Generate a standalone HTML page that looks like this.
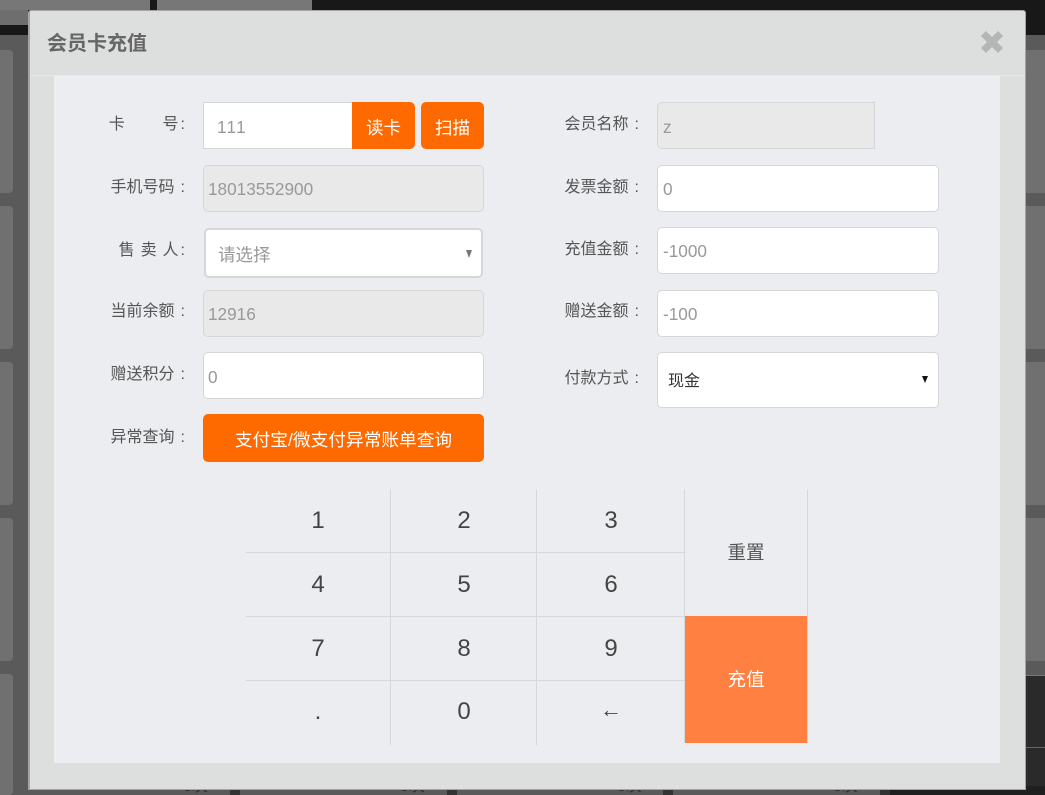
<!DOCTYPE html>
<html lang="zh"><head><meta charset="utf-8"><title>会员卡充值</title>
<style>
*{box-sizing:border-box}
html{margin:0;padding:0;background:#5b5b5b;width:1045px;height:795px;overflow:hidden}
body{margin:0;padding:0;width:1045px;height:795px;overflow:hidden;position:relative;font-family:"Liberation Sans","Noto Sans CJK SC",sans-serif;filter:blur(.3px);background:#5b5b5b}
div{position:absolute}
.l{left:0;width:185px;text-align:right;font-size:16px;line-height:24px;color:#555;white-space:pre}
.l i{font-style:normal;margin-left:6px}
.l i.s{margin-left:2px}
.r{left:454px;width:185px}
.f{height:47px;border:1px solid #d5d6d8;border-radius:5px;background:#fff;font-size:17.2px;line-height:47px;color:#999;padding-left:4px;white-space:pre;font-kerning:none}
.d{background:#e9e9e9}
.o{background:#ff6a00;color:#fff;text-align:center;font-size:17.5px;border-radius:5px}
.h{height:1px;background:#d6d7d9}
.v{width:1px;background:#d6d7d9}
.k{text-align:center;font-size:24px;line-height:30px;color:#444;width:60px}
.bg{background:#707070;border-radius:4px}
.b{font-size:16px;line-height:16px;color:#2e2e2e;white-space:pre}
</style></head><body>
<div style="left:0;top:0;width:1045px;height:35px;background:#181818"></div>
<div style="left:0;top:0;width:150px;height:10px;background:#777"></div>
<div style="left:157px;top:0;width:155px;height:10px;background:#777"></div>
<div style="left:0;top:35px;width:1045px;height:760px;background:#5a5a5a"></div>
<div style="left:0;top:10px;width:28px;height:15px;background:#6e6e6e"></div>
<div class="bg" style="left:-4px;top:50px;width:17px;height:143px"></div>
<div class="bg" style="left:-4px;top:206px;width:17px;height:143px"></div>
<div class="bg" style="left:-4px;top:362px;width:17px;height:143px"></div>
<div class="bg" style="left:-4px;top:518px;width:17px;height:143px"></div>
<div class="bg" style="left:-4px;top:674px;width:17px;height:121px"></div>
<div class="bg" style="left:1020px;top:50px;width:25px;height:143px;border-radius:0"></div>
<div class="bg" style="left:1020px;top:206px;width:25px;height:143px;border-radius:0"></div>
<div class="bg" style="left:1020px;top:362px;width:25px;height:143px;border-radius:0"></div>
<div class="bg" style="left:1020px;top:518px;width:25px;height:143px;border-radius:0"></div>
<div style="left:1020px;top:675px;width:25px;height:120px;background:#2a2a2a;border-top:1px solid #777"></div>
<div style="left:1020px;top:747px;width:25px;height:1px;background:#666"></div>
<div style="left:890px;top:786px;width:155px;height:9px;background:#1f1f1f"></div>
<div class="b" style="left:183px;top:779px">0次</div><div style="left:230px;top:788px;width:10px;height:7px;background:#333"></div>
<div class="b" style="left:400px;top:779px">0次</div><div style="left:447px;top:788px;width:10px;height:7px;background:#333"></div>
<div class="b" style="left:617px;top:779px">0次</div><div style="left:663px;top:788px;width:10px;height:7px;background:#333"></div>
<div class="b" style="left:833px;top:779px">0次</div><div style="left:880px;top:788px;width:10px;height:7px;background:#333"></div>

<div style="left:28px;top:10px;width:998px;height:780px;background:#dddfde;border:1px solid #a3a5a4;border-left-width:2px;border-radius:3px 3px 0 0">
<div style="left:17px;top:17px;font-size:20px;line-height:32px;font-weight:bold;color:#666;white-space:nowrap">会员卡充值</div>
<div style="left:950px;top:19px;width:26px;height:26px"><svg width="26" height="26" viewBox="0 0 26 26" style="display:block"><path d="M1 6L6 1L12 7L18 1L23 6L17 12L23 18L18 23L12 17L6 23L1 18L7 12Z" fill="#b4b5b5"/></svg></div>
</div>
<div style="left:30px;top:75px;width:995px;height:1px;background:#e6e8e8"></div>
<div style="left:54px;top:76px;width:946px;height:687px;background:#ecedf1"></div>

<div class="l" style="top:113px;word-spacing:5px">卡    号<i class="s">:</i></div>
<div class="l" style="top:176px">手机号码<i>:</i></div>
<div class="l" style="top:239px;word-spacing:1.5px">售 卖 人<i class="s">:</i></div>
<div class="l" style="top:300px">当前余额<i>:</i></div>
<div class="l" style="top:363px">赠送积分<i>:</i></div>
<div class="l" style="top:426px">异常查询<i>:</i></div>
<div class="l r" style="top:113px">会员名称<i>:</i></div>
<div class="l r" style="top:176px">发票金额<i>:</i></div>
<div class="l r" style="top:238px">充值金额<i>:</i></div>
<div class="l r" style="top:300px">赠送金额<i>:</i></div>
<div class="l r" style="top:367px">付款方式<i>:</i></div>

<div class="f" style="left:203px;top:102px;width:150px;border-radius:0;padding-left:13px;line-height:48px">111</div>
<div class="o" style="left:352px;top:102px;width:63px;height:47px;line-height:52px;border-radius:0 5px 5px 0">读卡</div>
<div class="o" style="left:421px;top:102px;width:63px;height:47px;line-height:52px">扫描</div>
<div class="f d" style="left:203px;top:165px;width:281px">18013552900</div>
<div class="f" style="left:204px;top:228px;width:279px;height:50px;border-width:2px;padding-left:12px;line-height:51px;font-size:17.5px">请选择</div>
<div style="left:466px;top:250px;width:0;height:0;border-left:3.5px solid transparent;border-right:3.5px solid transparent;border-top:8px solid #777"></div>
<div class="f d" style="left:203px;top:290px;width:281px">12916</div>
<div class="f" style="left:203px;top:352px;width:281px;line-height:48px">0</div>
<div class="o" style="left:203px;top:414px;width:281px;height:48px;line-height:52px;font-size:17.7px">支付宝/微支付异常账单查询</div>

<div class="f d" style="left:657px;top:102px;width:218px;border-radius:5px 0 0 5px;padding-left:5px;line-height:48px">z</div>
<div class="f" style="left:657px;top:165px;width:282px;padding-left:5px">0</div>
<div class="f" style="left:657px;top:227px;width:282px;padding-left:5px">-1000</div>
<div class="f" style="left:657px;top:290px;width:282px;padding-left:5px">-100</div>
<div class="f" style="left:657px;top:352px;width:282px;height:56px;color:#333;font-size:16px;line-height:57px;padding-left:10px">现金</div>
<div style="left:922px;top:376px;width:0;height:0;border-left:3.5px solid transparent;border-right:3.5px solid transparent;border-top:7px solid #111"></div>

<div class="h" style="left:246px;top:552px;width:438px"></div>
<div class="h" style="left:246px;top:616px;width:438px"></div>
<div class="h" style="left:246px;top:680px;width:438px"></div>
<div class="v" style="left:390px;top:489px;height:256px"></div>
<div class="v" style="left:536px;top:489px;height:256px"></div>
<div class="v" style="left:684px;top:489px;height:254px"></div>
<div class="v" style="left:807px;top:489px;height:254px"></div>
<div style="left:685px;top:616px;width:122px;height:127px;background:#ff8040;color:#fff;font-size:18.5px;line-height:128px;text-align:center">充值</div>
<div style="left:685px;top:538px;width:122px;height:30px;line-height:30px;text-align:center;font-size:18.5px;color:#555">重置</div>

<div class="k" style="left:288px;top:506px">1</div><div class="k" style="left:434px;top:506px">2</div><div class="k" style="left:581px;top:506px">3</div>
<div class="k" style="left:288px;top:570px">4</div><div class="k" style="left:434px;top:570px">5</div><div class="k" style="left:581px;top:570px">6</div>
<div class="k" style="left:288px;top:634px">7</div><div class="k" style="left:434px;top:634px">8</div><div class="k" style="left:581px;top:634px">9</div>
<div class="k" style="left:288px;top:697px">.</div><div class="k" style="left:434px;top:697px">0</div><div class="k" style="left:581px;top:695px;font-size:22px">←</div>
</body></html>
